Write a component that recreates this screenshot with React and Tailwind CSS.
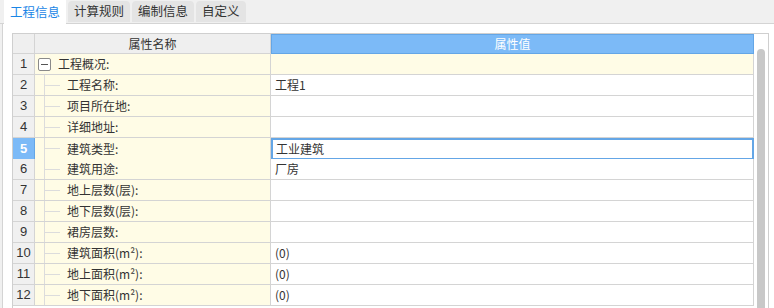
import { useState } from "react";

const rows = [
  { name: "工程概况:", value: "", group: true },
  { name: "工程名称:", value: "工程1" },
  { name: "项目所在地:", value: "" },
  { name: "详细地址:", value: "" },
  { name: "建筑类型:", value: "工业建筑" },
  { name: "建筑用途:", value: "厂房" },
  { name: "地上层数(层):", value: "" },
  { name: "地下层数(层):", value: "" },
  { name: "裙房层数:", value: "" },
  { name: "建筑面积(m²):", value: "(0)" },
  { name: "地上面积(m²):", value: "(0)" },
  { name: "地下面积(m²):", value: "(0)" },
];

const tabs = ["工程信息", "计算规则", "编制信息", "自定义"];

export default function App() {
  const [active, setActive] = useState(0);
  const [selected, setSelected] = useState(4);

  return (
    <div
      className="w-[774px] h-[308px] overflow-hidden bg-white text-[12px] text-[#333]"
      style={{ fontFamily: '"Noto Sans CJK SC", "Noto Sans", sans-serif' }}
    >
      {/* tabs */}
      <div className="h-[24px] bg-[#f0f0f0] border-b border-[#d4d4d4] flex items-end pl-[4px] gap-[2px]">
        {tabs.map((t, i) => (
          <button
            key={t}
            onClick={() => setActive(i)}
            className={
              i === active
                ? "h-[24px] px-[6px] bg-white text-[#1a86e6] text-[12.5px] leading-none -mb-px"
                : "h-[21px] px-[6px] mb-[1px] bg-[#e4e4e4] rounded-t-[4px] text-[12.5px] leading-none text-[#333]"
            }
          >
            {t}
          </button>
        ))}
      </div>

      <div className="flex h-[284px]">
        <div className="w-[3px] bg-[#f0f0f0] border-r border-[#d4d4d4]" />
        <div className="flex-1 pl-[9px] pt-[9px] pr-[5px]">
          <div className="flex border border-[#cfcfcf] h-[300px]">
            <div className="flex-1 flex flex-col">
              {/* header */}
              <div className="grid grid-cols-[22px_236px_1fr] h-[20px]">
                <div className="bg-[#efefef] border-r border-b border-[#d4d4d4]" />
                <div className="bg-[#efefef] border-r border-b border-[#d4d4d4] flex items-center justify-center">
                  属性名称
                </div>
                <div className="bg-[#7cbaf7] border border-[#64a6e6] flex items-center justify-center text-white">
                  属性值
                </div>
              </div>
              {rows.map((r, i) => (
                <div
                  key={i}
                  className="grid grid-cols-[22px_236px_1fr] h-[21px]"
                  onClick={() => setSelected(i)}
                >
                  <div
                    className={
                      i === selected
                        ? "bg-[#7cbaf7] border-r border-b border-[#64a6e6] flex items-center justify-center text-white font-bold text-[13px]"
                        : "bg-[#f0f0f0] border-r border-b border-[#d4d4d4] flex items-center justify-center text-[13px]"
                    }
                    style={{ fontFamily: '"Liberation Sans", sans-serif' }}
                  >
                    {i + 1}
                  </div>
                  <div className="bg-[#fffce6] border-r border-b border-[#d4d4d4] flex items-stretch">
                    {r.group ? (
                      <div className="flex items-center pl-[3px]">
                        <div className="w-[13px] h-[13px] border border-[#8a8a8a] rounded-[2px] bg-white flex items-center justify-center">
                          <div className="w-[7px] h-px bg-[#555]" />
                        </div>
                        <span className="ml-[7px]">{r.name}</span>
                      </div>
                    ) : (
                      <div className="flex items-stretch pl-[9px]">
                        <div className="w-[16px] border-l border-[#dcdcdc] flex items-center">
                          <div className="w-full h-px bg-[#dcdcdc]" />
                        </div>
                        <span className="ml-[7px] flex items-center">{r.name}</span>
                      </div>
                    )}
                  </div>
                  <div
                    className={
                      i === selected
                        ? "bg-white border-2 border-[#64a6e6] flex items-center pl-[3px]"
                        : r.group
                        ? "bg-[#fffce6] border-r border-b border-[#d4d4d4] flex items-center pl-[4px]"
                        : "bg-white border-r border-b border-[#d4d4d4] flex items-center pl-[4px]"
                    }
                  >
                    {r.value}
                  </div>
                </div>
              ))}
            </div>
            {/* scrollbar */}
            <div className="w-[14px] bg-white pt-[15px] flex justify-center">
              <div className="w-[8px] h-full bg-[#c8c8c8] rounded-t-[4px]" />
            </div>
          </div>
        </div>
      </div>
    </div>
  );
}
